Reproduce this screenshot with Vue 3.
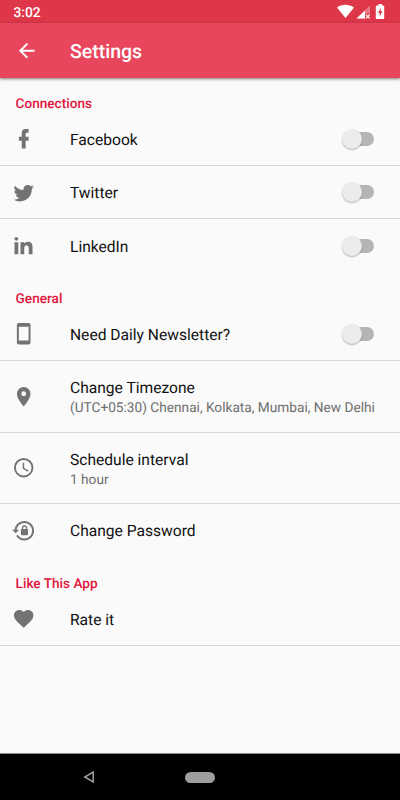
<template>
  <div class="screen">
    <div class="status-bar">
      <span class="time">3:02</span>
      <svg class="status-icons" viewBox="0 0 50 20" width="50" height="20">
        <!-- wifi -->
        <path d="M0 5.6C4.8 1.9 12 1.9 17 5.6L8.5 16Z" fill="#fff" />
        <!-- signal -->
        <path d="M33 3.5V11.5H28V16.5H19.5Z" fill="#fff" fill-opacity="0.35" />
        <path d="M28 8.5V16.5H19.5Z" fill="#fff" />
        <path d="M28.9 12.6l3.8 3.8M32.7 12.6l-3.8 3.8" stroke="#fff" stroke-width="1.3" />
        <!-- battery -->
        <path d="M40.1 3.5H41.5V2H45V3.5H46.4Q47.2 3.5 47.2 4.4V16Q47.2 17 46.4 17H39.7Q38.8 17 38.8 16V4.4Q38.8 3.5 40.1 3.5Z" fill="#fff" />
        <path d="M43.9 5.8L41 10.9H42.7V14.5L45.4 9.3H43.7Z" fill="#df374a" />
      </svg>
    </div>

    <header class="app-bar">
      <svg class="back" viewBox="0 0 24 24">
        <path d="M20 11H7.83l5.59-5.59L12 4l-8 8 8 8 1.41-1.41L7.83 13H20v-2z" />
      </svg>
      <h1>Settings</h1>
    </header>

    <main>
      <section v-for="group in groups" :key="group.title">
        <h2>{{ group.title }}</h2>
        <div
          v-for="item in group.items"
          :key="item.label"
          class="row"
          :class="{ tall: item.desc, line: item.line }"
          @click="toggle(item)"
        >
          <svg class="icon" viewBox="0 0 24 24">
            <path :d="icons[item.icon]" />
          </svg>
          <div class="info">
            <div class="label">{{ item.label }}</div>
            <div v-if="item.desc" class="desc">{{ item.desc }}</div>
          </div>
          <span v-if="'on' in item" class="switch" :class="{ on: item.on }"></span>
        </div>
      </section>
    </main>

    <nav class="nav-bar">
      <svg class="nav-back" viewBox="0 0 12 14" width="12" height="14">
        <path d="M10.2 2V12L1.8 7Z" fill="none" stroke="#9e9e9e" stroke-width="1.5" />
      </svg>
      <span class="nav-home"></span>
    </nav>
  </div>
</template>

<script setup>
import { reactive } from 'vue'

const groups = reactive([
  {
    title: 'Connections',
    items: [
      { label: 'Facebook', icon: 'facebook', on: false, line: true },
      { label: 'Twitter', icon: 'twitter', on: false, line: true },
      { label: 'LinkedIn', icon: 'linkedin', on: false }
    ]
  },
  {
    title: 'General',
    items: [
      { label: 'Need Daily Newsletter?', icon: 'phone', on: false, line: true },
      {
        label: 'Change Timezone',
        desc: '(UTC+05:30) Chennai, Kolkata, Mumbai, New Delhi',
        icon: 'marker',
        line: true
      },
      { label: 'Schedule interval', desc: '1 hour', icon: 'clock', line: true },
      { label: 'Change Password', icon: 'lock' }
    ]
  },
  {
    title: 'Like This App',
    items: [{ label: 'Rate it', icon: 'heart', line: true }]
  }
])

const icons = {
  facebook: 'M17,2V6H15C14.31,6 14,6.81 14,7.5V10H17V14H14V22H10V14H7V10H10V6A4,4 0 0,1 14,2H17Z',
  twitter: 'M22.46,6C21.69,6.35 20.86,6.58 20,6.69C20.88,6.16 21.56,5.32 21.88,4.31C21.05,4.81 20.13,5.16 19.16,5.36C18.37,4.5 17.26,4 16,4C13.65,4 11.73,5.92 11.73,8.29C11.73,8.63 11.77,8.96 11.84,9.27C8.28,9.09 5.11,7.38 3,4.79C2.63,5.42 2.42,6.16 2.42,6.94C2.42,8.43 3.17,9.75 4.33,10.5C3.62,10.5 2.96,10.3 2.38,10V10.03C2.38,12.11 3.86,13.85 5.82,14.24C5.46,14.34 5.08,14.39 4.69,14.39C4.42,14.39 4.15,14.36 3.89,14.31C4.43,16 6,17.26 7.89,17.29C6.43,18.45 4.58,19.13 2.56,19.13C2.22,19.13 1.88,19.11 1.54,19.07C3.44,20.29 5.7,21 8.12,21C16,21 20.33,14.46 20.33,8.79C20.33,8.6 20.33,8.42 20.32,8.23C21.16,7.63 21.88,6.87 22.46,6Z',
  linkedin: 'M6.4 4.95c0 1.06-.85 1.92-1.91 1.92s-1.91-.86-1.91-1.92c0-1.06.85-1.93 1.91-1.93s1.91.87 1.91 1.93zm.02 3.46H2.57v12.3h3.85zm6.14 0h-3.82v12.3h3.82v-6.46c0-3.6 4.64-3.89 4.64 0v6.46h3.84v-7.8c0-6.07-6.87-5.85-8.48-2.86z',
  phone: 'M17,19H7V5H17M17,1H7C5.89,1 5,1.89 5,3V21A2,2 0 0,0 7,23H17A2,2 0 0,0 19,21V3C19,1.89 18.1,1 17,1Z',
  marker: 'M12,11.5A2.5,2.5 0 0,1 9.5,9A2.5,2.5 0 0,1 12,6.5A2.5,2.5 0 0,1 14.5,9A2.5,2.5 0 0,1 12,11.5M12,2A7,7 0 0,0 5,9C5,14.25 12,22 12,22C12,22 19,14.25 19,9A7,7 0 0,0 12,2Z',
  clock: 'M12,20A8,8 0 0,0 20,12A8,8 0 0,0 12,4A8,8 0 0,0 4,12A8,8 0 0,0 12,20M12,2A10,10 0 0,1 22,12A10,10 0 0,1 12,22A10,10 0 0,1 2,12A10,10 0 0,1 12,2M12.5,7V12.25L17,14.92L16.25,16.15L11,13V7H12.5Z',
  lock: 'M12.63,2C18.16,2 22.64,6.5 22.64,12C22.64,17.5 18.16,22 12.63,22C9.12,22 6.05,20.18 4.26,17.43L5.84,16.18C7.25,18.47 9.76,20 12.64,20A8,8 0 0,0 20.64,12A8,8 0 0,0 12.64,4C8.56,4 5.2,7.06 4.71,11H7.47L3.73,14.73L0,11H2.69C3.19,5.95 7.45,2 12.63,2M15.59,10.24C16.09,10.25 16.5,10.65 16.5,11.16V15.77C16.5,16.27 16.09,16.69 15.58,16.69H10.05C9.54,16.69 9.13,16.27 9.13,15.77V11.16C9.13,10.65 9.54,10.25 10.04,10.24V9.23C10.04,7.7 11.29,6.46 12.81,6.46C14.34,6.46 15.59,7.7 15.59,9.23V10.24M12.81,7.86C12.06,7.86 11.44,8.47 11.44,9.23V10.24H14.19V9.23C14.19,8.47 13.57,7.86 12.81,7.86Z',
  heart: 'M12,21.35L10.55,20.03C5.4,15.36 2,12.27 2,8.5C2,5.41 4.42,3 7.5,3C9.24,3 10.91,3.81 12,5.08C13.09,3.81 14.76,3 16.5,3C19.58,3 22,5.41 22,8.5C22,12.27 18.6,15.36 13.45,20.03L12,21.35Z'
}

function toggle(item) {
  if ('on' in item) item.on = !item.on
}
</script>

<style>
body {
  margin: 0;
}
</style>

<style scoped>
.screen {
  width: 400px;
  height: 800px;
  display: flex;
  flex-direction: column;
  overflow: hidden;
  background: #fafafa;
  font-family: Roboto, "Liberation Sans", sans-serif;
  text-rendering: geometricPrecision;
}

.status-bar {
  height: 23px;
  flex: none;
  display: flex;
  justify-content: space-between;
  padding: 0 13px 0 13.5px;
  background: #df374a;
  color: #fff;
}
.time {
  font-size: 13.8px;
  font-weight: 500;
  line-height: 27px;
}
.status-icons {
  margin-top: 2px;
}

.app-bar {
  height: 54.5px;
  flex: none;
  display: flex;
  align-items: center;
  padding-left: 15.3px;
  background: #e8465c;
  box-shadow: 0 1px 3px rgba(0, 0, 0, 0.5);
  z-index: 1;
}
.back {
  width: 23.4px;
  height: 23.4px;
  fill: #fff;
}
h1 {
  margin: 3px 0 0 31.3px;
  font-size: 19.5px;
  font-weight: 500;
  line-height: 24px;
  color: #fff;
}

main {
  flex: 1;
}
h2 {
  box-sizing: border-box;
  height: 35.3px;
  margin: 0;
  padding: 18px 0 0 15.6px;
  font-size: 13.6px;
  font-weight: 500;
  line-height: 17px;
  color: #e2163c;
}

.row {
  box-sizing: border-box;
  height: 53.3px;
  display: flex;
  align-items: center;
  padding: 0 26px 0 11.5px;
  border-bottom: 1px solid transparent;
}
.row.tall {
  height: 71.5px;
}
.row.line {
  border-bottom-color: #d6d6d6;
}
.icon {
  flex: none;
  width: 23.4px;
  height: 23.4px;
  fill: #737373;
}
.info {
  flex: 1;
  margin-left: 35.1px;
  padding-top: 2px;
  white-space: nowrap;
}
.label {
  font-size: 15.6px;
  line-height: 20px;
  color: #111;
}
.desc {
  margin-top: 1px;
  margin-bottom: -1px;
  font-size: 13.68px;
  line-height: 19px;
  color: #6e6e6e;
}

/* 开关 */
.switch {
  position: relative;
  width: 31px;
  height: 14px;
  border-radius: 7px;
  background: #b5b5b5;
}
.switch::before {
  content: "";
  position: absolute;
  top: -3px;
  left: -1.5px;
  width: 20px;
  height: 20px;
  border-radius: 50%;
  background: #ececec;
  box-shadow: 0 1px 1.5px rgba(0, 0, 0, 0.3);
}
.switch.on::before {
  left: 13px;
}

.nav-bar {
  box-sizing: border-box;
  height: 47px;
  flex: none;
  display: flex;
  align-items: center;
  padding-left: 82.5px;
  border-top: 1px solid #8a8a8a;
  background: #000;
}
.nav-home {
  width: 30px;
  height: 11px;
  margin-left: 90.5px;
  border-radius: 6px;
  background: #9e9e9e;
}
</style>
